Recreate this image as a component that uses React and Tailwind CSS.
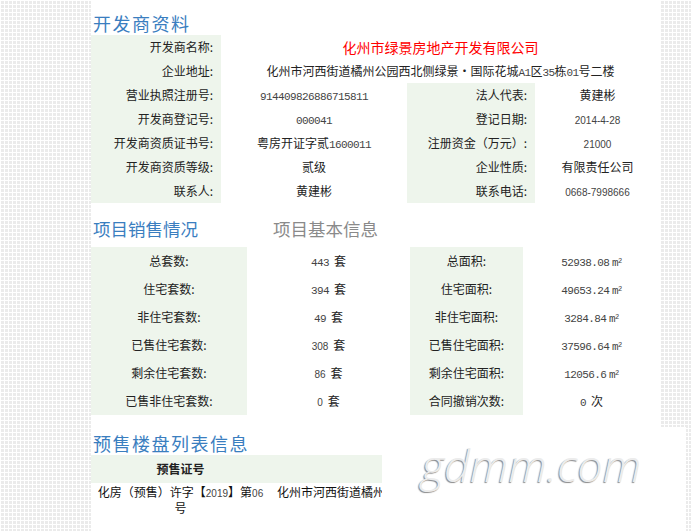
import React from "react";

const serifNum = "font-['Liberation_Mono',monospace] text-[11px] tracking-[-0.6px] text-[#444]";
const sansNum = "font-['Liberation_Sans',sans-serif] text-[10px] text-[#444]";

const Num = ({ children, sans }) => <span className={sans ? sansNum : serifNum}>{children}</span>;

const M2 = () => (
  <span className={serifNum}>
    m<sup className="text-[7px]">2</sup>
  </span>
);

const Unit = ({ children }) => <span className="ml-[5px]">{children}</span>;

const Label = ({ children, center }) => (
  <div className={`bg-[#eef5ec] text-[12px] text-[#222] ${center ? "text-center" : "text-right pr-[8px]"}`}>
    {children}
  </div>
);

const Value = ({ children, span }) => (
  <div className={`text-center text-[12px] text-[#222] ${span ? "col-span-3" : ""}`}>{children}</div>
);

const devRows = [
  ["营业执照注册号:", <Num>914409826886715811</Num>, "法人代表:", "黄建彬"],
  ["开发商登记号:", <Num>000041</Num>, "登记日期:", <Num sans>2014-4-28</Num>],
  ["开发商资质证书号:", <>粤房开证字贰<Num>1600011</Num></>, "注册资金（万元）:", <Num sans>21000</Num>],
  ["开发商资质等级:", "贰级", "企业性质:", "有限责任公司"],
  ["联系人:", "黄建彬", "联系电话:", <Num sans>0668-7998666</Num>],
];

const saleRows = [
  ["总套数:", <><Num>443</Num><Unit>套</Unit></>, "总面积:", <><Num>52938.08</Num> <M2 /></>],
  ["住宅套数:", <><Num>394</Num><Unit>套</Unit></>, "住宅面积:", <><Num>49653.24</Num> <M2 /></>],
  ["非住宅套数:", <><Num>49</Num><Unit>套</Unit></>, "非住宅面积:", <><Num>3284.84</Num> <M2 /></>],
  ["已售住宅套数:", <><Num sans>308</Num><Unit>套</Unit></>, "已售住宅面积:", <><Num>37596.64</Num> <M2 /></>],
  ["剩余住宅套数:", <><Num sans>86</Num><Unit>套</Unit></>, "剩余住宅面积:", <><Num>12056.6</Num> <M2 /></>],
  ["已售非住宅套数:", <><Num sans>0</Num><Unit>套</Unit></>, "合同撤销次数:", <><Num>0</Num><Unit>次</Unit></>],
];

export default function App() {
  return (
    <div className="relative h-[531px] w-[691px] overflow-hidden font-['Noto_Sans_CJK_SC',sans-serif] [background-image:linear-gradient(90deg,#fff_1px,transparent_1px),linear-gradient(#fff_1px,#ebebeb_1px)] [background-size:4px_4px]">
      <div className="ml-[91px] h-full w-[569px] bg-white">
        {/* 开发商资料 */}
        <div className="flex h-[35px] items-end pl-[2px]">
          <h2 className="text-[18px] leading-[24px] tracking-[1.5px] text-[#3a7ebf]">开发商资料</h2>
        </div>
        <div className="grid grid-cols-[130px_186px_128px_125px] auto-rows-[24px] items-stretch leading-[24px]">
          <Label>开发商名称:</Label>
          <div className="col-span-3 text-center text-[14px] text-[#ff0000]">化州市绿景房地产开发有限公司</div>
          <Label>企业地址:</Label>
          <Value span>
            化州市河西街道橘州公园西北侧绿景・国际花城<Num>A1</Num>区<Num>35</Num>栋<Num>01</Num>号二楼
          </Value>
          {devRows.map((r, i) => (
            <React.Fragment key={i}>
              <Label>{r[0]}</Label>
              <Value>{r[1]}</Value>
              <Label>{r[2]}</Label>
              <Value>{r[3]}</Value>
            </React.Fragment>
          ))}
        </div>

        {/* 项目销售情况 */}
        <div className="flex h-[44px] items-end pb-[6px] pl-[2px]">
          <h2 className="w-[180px] text-[17.5px] leading-[24px] text-[#3a7ebf]">项目销售情况</h2>
          <h2 className="text-[17.5px] leading-[24px] text-[#8a8a8a]">项目基本信息</h2>
        </div>
        <div className="grid grid-cols-[156px_163px_113px_137px] auto-rows-[28px] leading-[28px]">
          {saleRows.map((r, i) => (
            <React.Fragment key={i}>
              <Label center>{r[0]}</Label>
              <Value>{r[1]}</Value>
              <Label center>{r[2]}</Label>
              <Value>{r[3]}</Value>
            </React.Fragment>
          ))}
        </div>

        {/* 预售楼盘列表信息 */}
        <div className="flex h-[38px] items-end pl-[2px]">
          <h2 className="text-[18px] leading-[20px] tracking-[1.5px] text-[#3a7ebf]">预售楼盘列表信息</h2>
        </div>
        <div className="mt-[2px] grid grid-cols-[179px_190px_200px]">
          <div className="h-[28px] bg-[#eef5ec] text-center text-[12px] font-bold leading-[28px] text-[#222]">预售证号</div>
          <div className="h-[28px] bg-[#eef5ec]" />
          <div className="h-[28px] bg-[#eef5ec]" />
          <div className="px-[4px] py-[2px] text-center text-[12px] leading-[14px] text-[#111]">
            化房（预售）许字【<Num sans>2019</Num>】第<Num sans>06</Num>号
          </div>
          <div className="overflow-hidden whitespace-nowrap py-[2px] pl-[7px] text-left text-[12px] leading-[14px] text-[#111]">
            化州市河西街道橘州公园西北侧绿景・国际花城
          </div>
          <div />
        </div>
      </div>

      {/* watermark */}
      <div className="absolute left-[382px] top-[427px] h-[110px] w-[304px] bg-white pl-[39px] pt-[15px]">
        <span className="font-['Open_Sans',sans-serif] text-[45px] font-light italic leading-none text-[#ececec] [text-shadow:-1px_1px_1px_#8a8a8a]">
          gdmm.com
        </span>
      </div>
    </div>
  );
}
